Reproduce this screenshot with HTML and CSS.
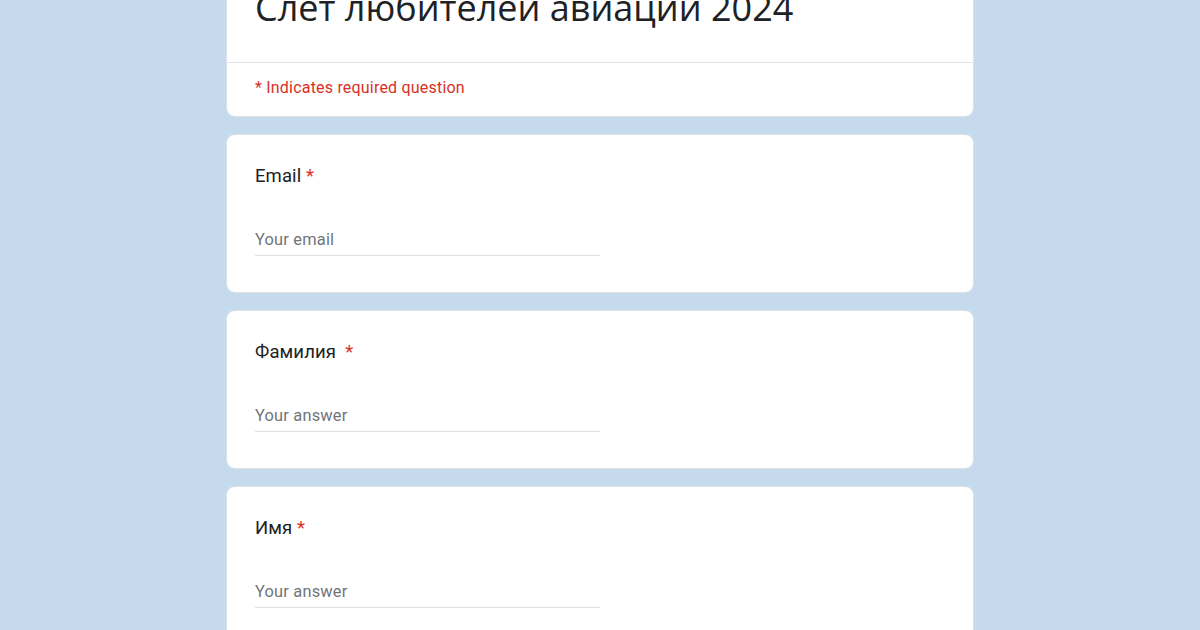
FILE: index.html
```html
<!DOCTYPE html>
<html lang="ru">
<head>
<meta charset="utf-8">
<title>Слет любителей авиации 2024</title>
<link rel="stylesheet" href="styles.css">
</head>
<body>
<main class="form">
  <section class="card card-head">
    <div class="head-title">
      <h1 class="title">Слет любителей авиации 2024</h1>
    </div>
    <div class="head-note">* Indicates required question</div>
  </section>

  <section class="card question">
    <div class="q-label">Email <span class="req">*</span></div>
    <div class="q-input"><span class="placeholder">Your email</span></div>
  </section>

  <section class="card question">
    <div class="q-label">Фамилия&nbsp; <span class="req">*</span></div>
    <div class="q-input"><span class="placeholder">Your answer</span></div>
  </section>

  <section class="card question">
    <div class="q-label">Имя <span class="req">*</span></div>
    <div class="q-input"><span class="placeholder">Your answer</span></div>
  </section>
</main>
</body>
</html>
```

FILE: styles.css
```css
html, body {
  margin: 0;
  padding: 0;
}

body {
  background: #c6daee;
  font-family: Roboto, "Liberation Sans", sans-serif;
  color: #202124;
  height: 630px;
  overflow: hidden;
}

.form {
  width: 748px;
  margin: -38px auto 0;
  display: flex;
  flex-direction: column;
  gap: 17px;
}

.card {
  background: #ffffff;
  border: 1px solid #dbe1e8;
  border-radius: 9px;
  box-sizing: border-box;
}

.head-title {
  padding: 22px 28px 31px;
  border-bottom: 1px solid #e2e4e7;
}

.title {
  margin: 0;
  font-family: "Open Sans", "Liberation Sans", sans-serif;
  font-weight: 400;
  font-size: 36px;
  line-height: 46px;
  color: #202124;
}

.head-note {
  padding: 15px 28px 18px;
  font-size: 16px;
  line-height: 20px;
  color: #d93025;
  letter-spacing: 0.2px;
}

.question {
  height: 159px;
  padding: 28px 28px 36px;
}

.q-label {
  font-size: 18.5px;
  line-height: 26px;
  letter-spacing: 0.1px;
  color: #202124;
}

.req {
  color: #d93025;
}

.q-input {
  width: 50%;
  margin-top: 40px;
  padding-bottom: 4px;
  border-bottom: 1px solid #e0e0e0;
  line-height: 22px;
}

.placeholder {
  font-size: 16.4px;
  letter-spacing: 0.2px;
  color: #70757a;
}
```
